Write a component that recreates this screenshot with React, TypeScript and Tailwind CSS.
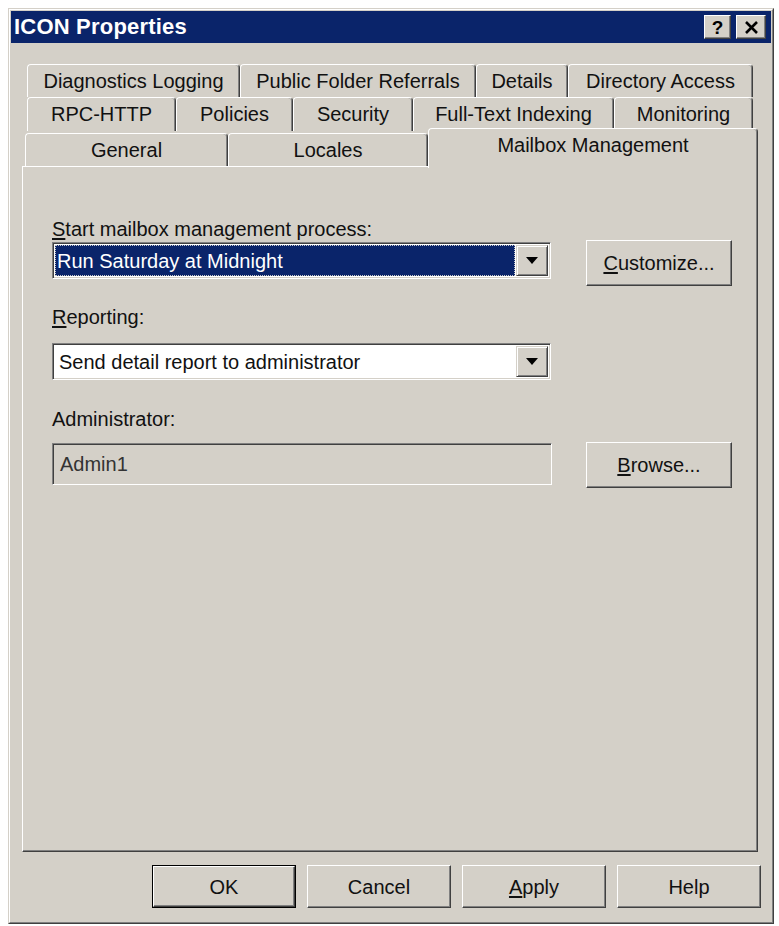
import type { ReactNode } from 'react';

type TabDef = { label: string; w: string };

const backRow: TabDef[] = [
  { label: 'Diagnostics Logging', w: 'w-[213px]' },
  { label: 'Public Folder Referrals', w: 'w-[236px]' },
  { label: 'Details', w: 'w-[92px]' },
  { label: 'Directory Access', w: 'w-[185px]' },
];

const middleRow: TabDef[] = [
  { label: 'RPC-HTTP', w: 'w-[149px]' },
  { label: 'Policies', w: 'w-[117px]' },
  { label: 'Security', w: 'w-[120px]' },
  { label: 'Full-Text Indexing', w: 'w-[201px]' },
  { label: 'Monitoring', w: 'w-[139px]' },
];

const frontRow: TabDef[] = [
  { label: 'General', w: 'w-[203px]' },
  { label: 'Locales', w: 'w-[200px]' },
];

function Tab({ label, w, h }: TabDef & { h: string }) {
  return (
    <div
      className={`${w} ${h} flex shrink-0 items-center justify-center rounded-t-[4px] border-l border-r border-t border-l-white border-r-[#404040] border-t-white bg-[#d4d0c8] pb-[1px] shadow-[inset_-1px_0_0_#808080]`}
    >
      {label}
    </div>
  );
}

// Raised 3D push button, optionally drawn as the default button with a black ring.
function PushButton({ children, w, h, isDefault }: { children: ReactNode; w: string; h: string; isDefault?: boolean }) {
  const face = (
    <div className="flex h-full w-full items-center justify-center border border-b-[#404040] border-l-white border-r-[#404040] border-t-white bg-[#d4d0c8] shadow-[inset_-1px_-1px_0_#808080]">
      {children}
    </div>
  );
  if (isDefault) {
    return <div className={`${w} ${h} shrink-0 border border-black`}>{face}</div>;
  }
  return <div className={`${w} ${h} shrink-0`}>{face}</div>;
}

function DropArrow() {
  return (
    <div className="flex w-[32px] shrink-0 items-center justify-center border border-b-[#404040] border-l-[#d4d0c8] border-r-[#404040] border-t-[#d4d0c8] bg-[#d4d0c8] shadow-[inset_1px_1px_0_#ffffff,inset_-1px_-1px_0_#808080]">
      <svg width="12" height="7" viewBox="0 0 12 7">
        <polygon points="0,0 12,0 6,7" fill="#000" />
      </svg>
    </div>
  );
}

function Sunken({ children, className }: { children: ReactNode; className: string }) {
  return (
    <div
      className={`${className} flex shrink-0 border border-b-white border-l-[#808080] border-r-white border-t-[#808080] shadow-[inset_1px_1px_0_#404040,inset_-1px_-1px_0_#d4d0c8]`}
    >
      {children}
    </div>
  );
}

export default function App() {
  return (
    <div className="h-[926px] w-[779px] bg-white pl-[8px] pt-[8px] font-['Liberation_Sans',Arial,sans-serif] text-[20px] leading-[22px] text-[#111]">
      <div className="h-[916px] w-[766px] border border-b-[#404040] border-l-[#d4d0c8] border-r-[#404040] border-t-[#d4d0c8]">
        <div className="h-full w-full border border-b-[#808080] border-l-white border-r-[#808080] border-t-white bg-[#d4d0c8] p-[1px]">
          {/* caption bar */}
          <div className="flex h-[32px] items-center justify-between bg-[#0a246a] pl-[3px] pr-[5px]">
            <span className="text-[22px] font-bold tracking-[0.2px] text-white">ICON Properties</span>
            <div className="flex gap-[5px]">
              <div className="flex h-[24px] w-[27px] items-center justify-center border border-b-[#404040] border-l-white border-r-[#404040] border-t-white bg-[#d4d0c8] text-[19px] font-bold leading-none text-black shadow-[inset_-1px_-1px_0_#808080]">
                ?
              </div>
              <div className="flex h-[24px] w-[30px] items-center justify-center border border-b-[#404040] border-l-white border-r-[#404040] border-t-white bg-[#d4d0c8] shadow-[inset_-1px_-1px_0_#808080]">
                <svg width="15" height="13" viewBox="0 0 15 13">
                  <path d="M2 1 L13 12 M13 1 L2 12" stroke="#000" strokeWidth="2.6" />
                </svg>
              </div>
            </div>
          </div>

          {/* tab strip */}
          <div className="mt-[21px]">
            <div className="ml-[16px] flex h-[33px]">
              {backRow.map((t) => (
                <Tab key={t.label} {...t} h="h-[33px]" />
              ))}
            </div>
            <div className="ml-[16px] flex h-[34px]">
              {middleRow.map((t) => (
                <Tab key={t.label} {...t} h="h-[34px]" />
              ))}
            </div>
            <div className="ml-[14px] flex h-[35px] items-end">
              {frontRow.map((t) => (
                <Tab key={t.label} {...t} h="h-[33px]" />
              ))}
              <div className="relative z-10 -mb-[2px] flex h-[40px] w-[330px] shrink-0 items-start justify-center rounded-t-[4px] border-l border-r border-t border-l-white border-r-[#404040] border-t-white bg-[#d4d0c8] pt-[5px] shadow-[inset_-1px_0_0_#808080]">
                Mailbox Management
              </div>
            </div>
          </div>

          {/* page body */}
          <div className="ml-[11px] h-[686px] w-[736px] border border-b-[#404040] border-l-white border-r-[#404040] border-t-white pl-[29px] shadow-[inset_-1px_-1px_0_#808080]">
            <div className="mt-[51px]">
              <u className="underline-offset-2">S</u>tart mailbox management process:
            </div>
            <div className="flex h-[46px] gap-[35px]">
              <Sunken className="mt-[2px] h-[37px] w-[499px] bg-white p-[2px]">
                <div className="mr-[1px] flex flex-1 items-center bg-[#0a246a] pl-[2px] text-white outline-1 -outline-offset-1 outline-[#c8c8c8] outline-dotted">
                  Run Saturday at Midnight
                </div>
                <DropArrow />
              </Sunken>
              <PushButton w="w-[146px]" h="h-[46px]">
                <span>
                  <u className="underline-offset-2">C</u>ustomize...
                </span>
              </PushButton>
            </div>

            <div className="mt-[20px]">
              <u className="underline-offset-2">R</u>eporting:
            </div>
            <Sunken className="mt-[15px] h-[37px] w-[499px] bg-white p-[2px]">
              <div className="flex flex-1 items-center pl-[4px]">Send detail report to administrator</div>
              <DropArrow />
            </Sunken>

            <div className="mt-[28px]">Administrator:</div>
            <div className="mt-[12px] flex h-[46px] gap-[34px]">
              <Sunken className="mt-[1px] h-[42px] w-[500px] items-center bg-[#d4d0c8] pl-[7px] text-[#333]">
                Admin1
              </Sunken>
              <PushButton w="w-[146px]" h="h-[46px]">
                <span>
                  <u className="underline-offset-2">B</u>rowse...
                </span>
              </PushButton>
            </div>
          </div>

          {/* dialog buttons */}
          <div className="ml-[141px] mt-[13px] flex gap-[11px]">
            <PushButton w="w-[144px]" h="h-[43px]" isDefault>
              OK
            </PushButton>
            <PushButton w="w-[144px]" h="h-[43px]">
              Cancel
            </PushButton>
            <PushButton w="w-[144px]" h="h-[43px]">
              <span>
                <u className="underline-offset-2">A</u>pply
              </span>
            </PushButton>
            <PushButton w="w-[144px]" h="h-[43px]">
              Help
            </PushButton>
          </div>
        </div>
      </div>
    </div>
  );
}
